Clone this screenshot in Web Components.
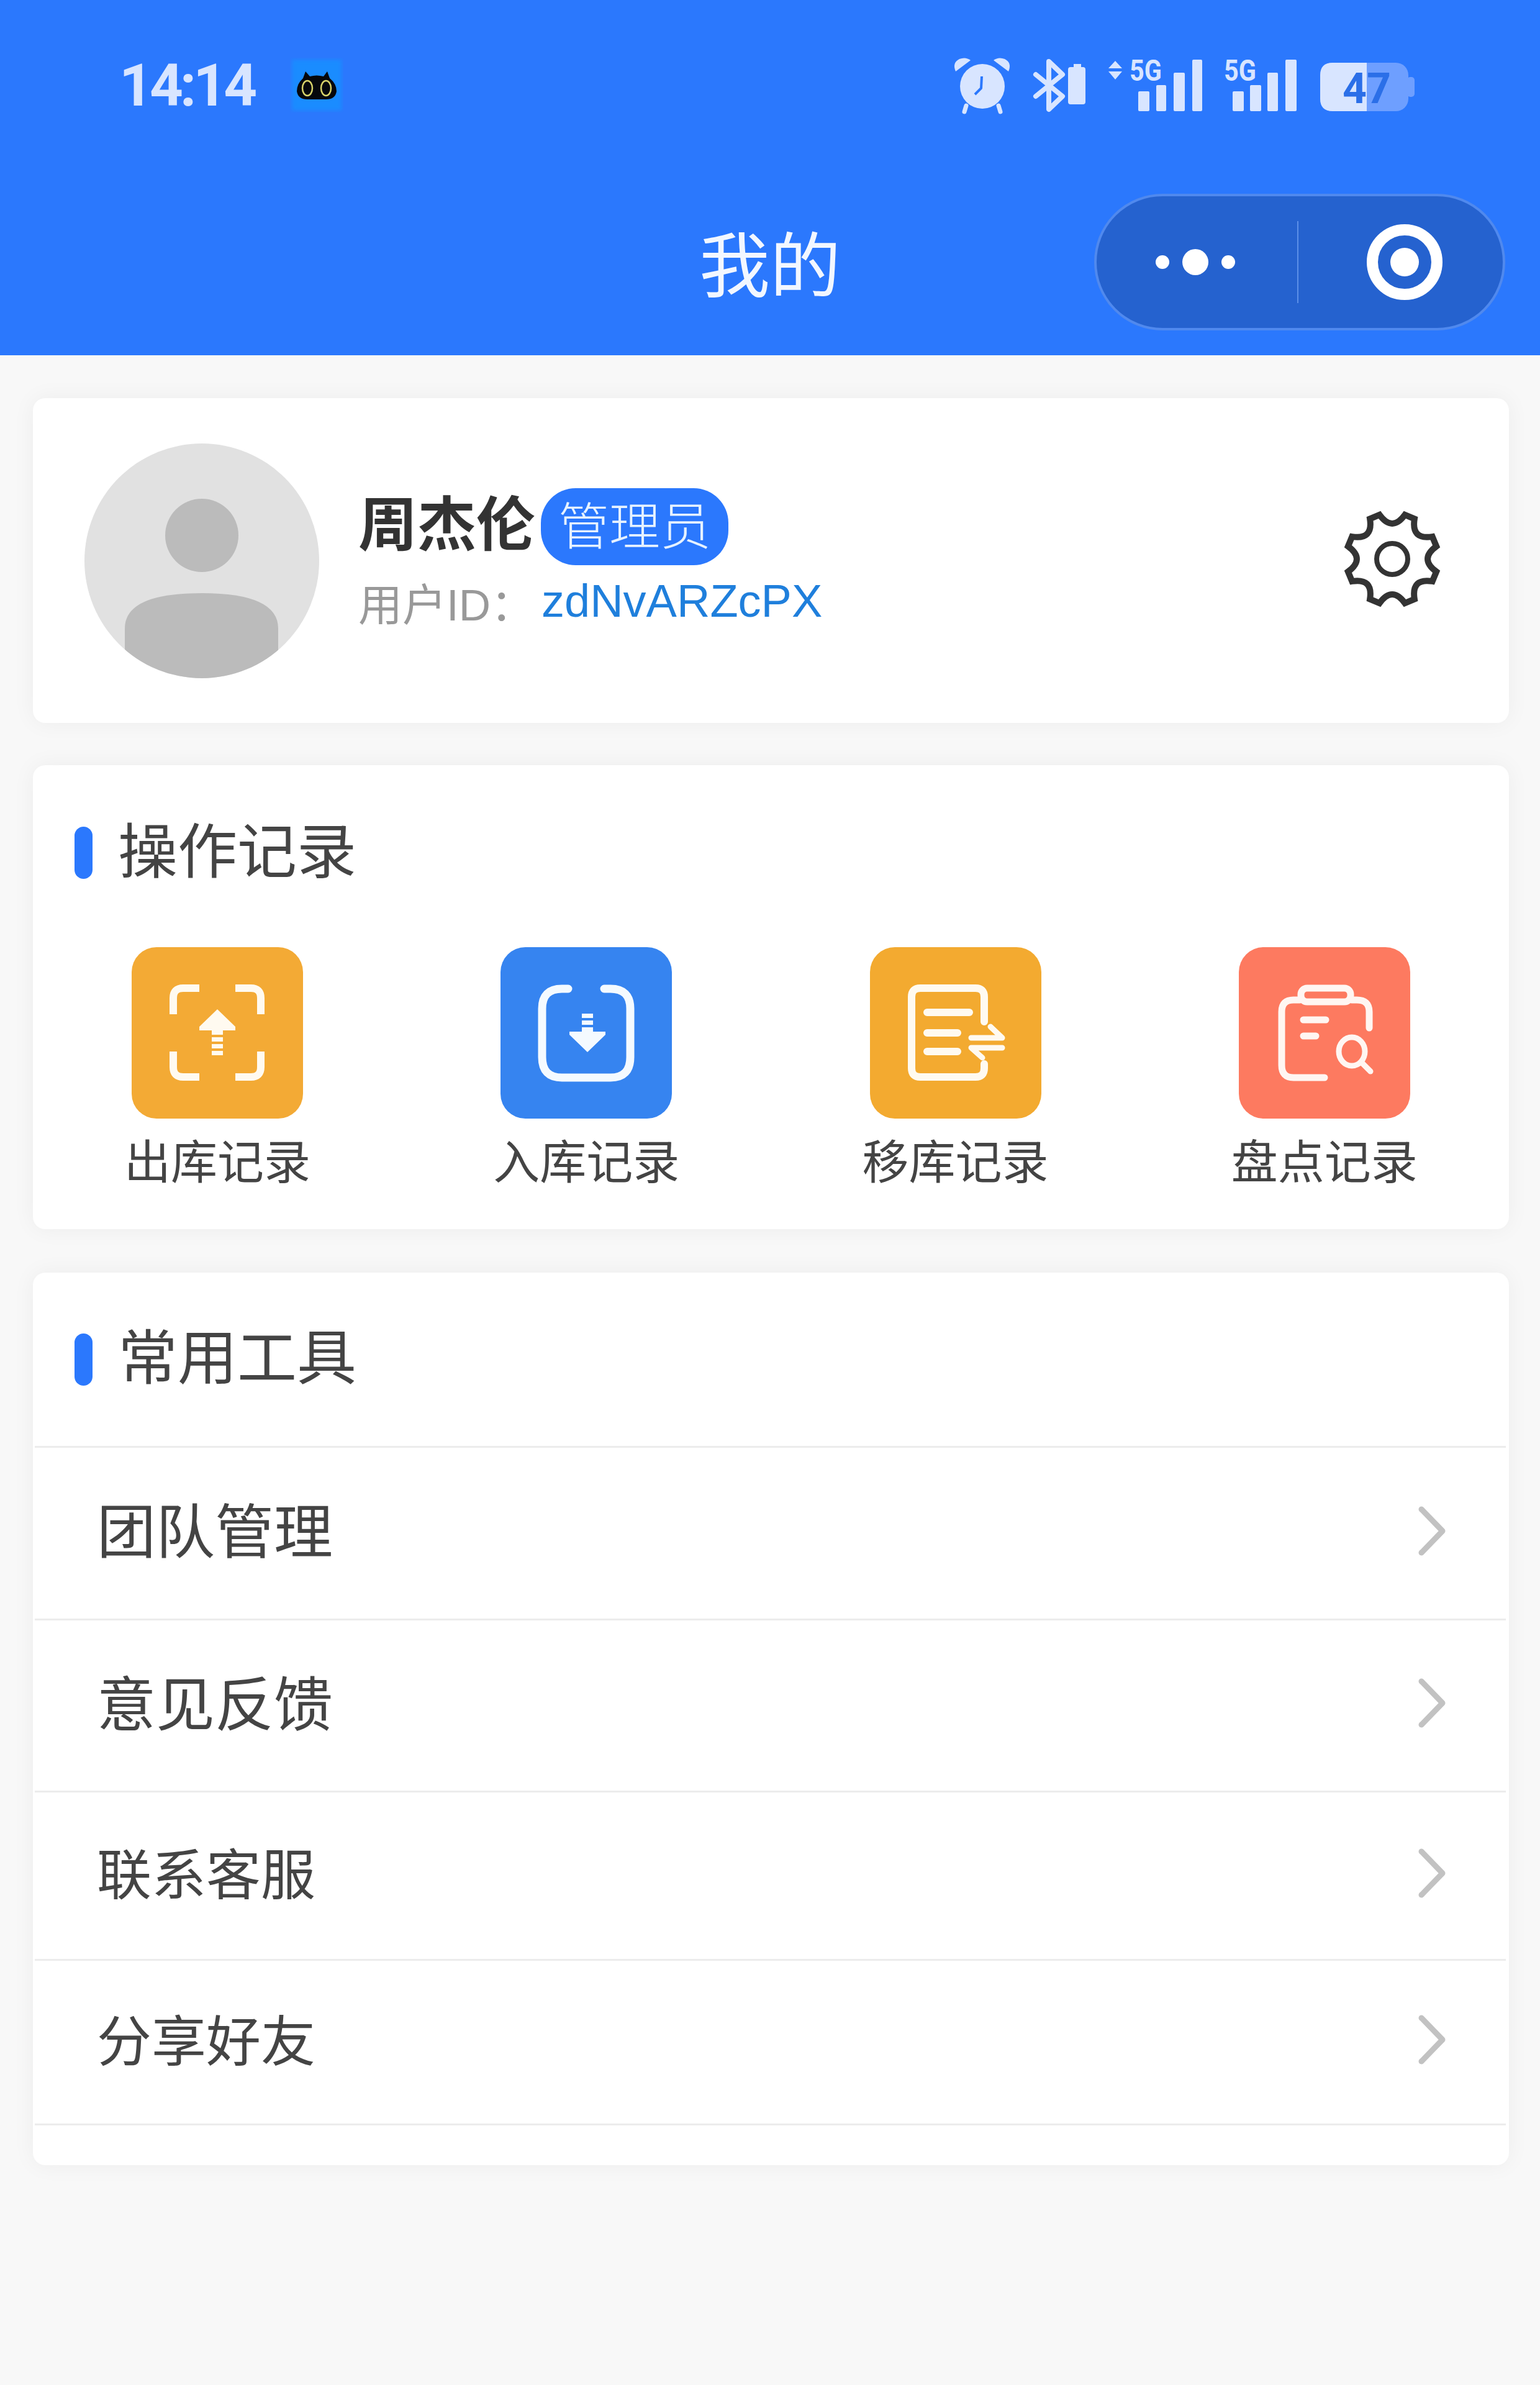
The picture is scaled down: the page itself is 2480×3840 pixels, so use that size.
<!DOCTYPE html>
<html lang="zh-CN">
<head>
<meta charset="utf-8">
<title>我的</title>
<style>
html, body {
    margin: 0;
    width: 2480px;
    height: 3840px;
    overflow: hidden;
    background: #f8f8f8;
    font-family: "Noto Sans CJK SC", "Noto Sans", sans-serif;
    color: #444;
}
</style>
</head>
<body>

<app-header>我的</app-header>

<page-body>
    <profile-card name="周杰伦" role="管理员" uid="zdNvARZcPX"></profile-card>

    <ui-card style="--pad-bottom: 67px">
        <section-title>操作记录</section-title>
        <record-grid>
            <record-item label="出库记录" color="#f3aa35">
                <svg viewBox="0 0 276 276" fill="none" stroke="#fffaf0" stroke-width="12">
                    <path d="M67 108V82Q67 66 83 66H109M167 66H192Q208 66 208 82V108M67 168V193Q67 209 83 209H109M167 209H192Q208 209 208 193V168"/>
                    <path d="M138 100L167 128V134H109V128Z" fill="#fffaf0" stroke="none"/>
                    <path d="M138 134V176" stroke-width="18" stroke-dasharray="7 4"/>
                </svg>
            </record-item>
            <record-item label="入库记录" color="#3684f0">
                <svg viewBox="0 0 276 276" fill="none" stroke="#f4faff" stroke-width="13" stroke-linecap="round">
                    <path d="M109 67H99Q67 67 67 99V177Q67 210 99 210H177Q209 210 209 177V99Q209 67 177 67H167"/>
                    <path d="M140 107V140" stroke-width="18" stroke-dasharray="7 4" stroke-linecap="butt"/>
                    <path d="M140 169L111 141V136H169V141Z" fill="#f4faff" stroke="none"/>
                </svg>
            </record-item>
            <record-item label="移库记录" color="#f3aa30">
                <svg viewBox="0 0 276 276" fill="none" stroke="#fffaf0" stroke-width="12" stroke-linecap="round">
                    <path d="M184 120V80Q184 66 170 66H81Q67 66 67 80V195Q67 209 81 209H170Q184 209 184 195V188"/>
                    <path d="M92 105H160M92 138H141M92 168H141"/>
                    <path d="M163 146H213L194 128M213 162H163L181 178" stroke-width="9" stroke-linejoin="round"/>
                </svg>
            </record-item>
            <record-item label="盘点记录" color="#fd7a60">
                <svg viewBox="0 0 276 276" fill="none" stroke="#fff6f2" stroke-width="11" stroke-linecap="round">
                    <rect x="100" y="66" width="80" height="22" rx="10"/>
                    <path d="M98 85H88Q69 85 69 104V190Q69 210 88 210H138M182 85H190Q210 85 210 104V130"/>
                    <path d="M104 117H140M104 143H124"/>
                    <ellipse cx="182" cy="168" rx="21" ry="23" stroke-width="9"/>
                    <path d="M198 186L212 200" stroke-width="9"/>
                </svg>
            </record-item>
        </record-grid>
    </ui-card>

    <ui-card style="--pad-bottom: 64px; margin-top: 2px">
        <section-title style="--title-h: 279px">常用工具</section-title>
        <tool-row style="--row-h: 278px; --row-font: 95px">团队管理</tool-row>
        <tool-row style="--row-h: 277px; --row-font: 95px">意见反馈</tool-row>
        <tool-row style="--row-h: 271px; --row-font: 88px">联系客服</tool-row>
        <tool-row style="--row-h: 268px; --row-font: 88px">分享好友</tool-row>
    </ui-card>
</page-body>

<script>
class StatusBar extends HTMLElement {

    constructor() {
        super()
        this._shadowRoot = this.attachShadow({mode: 'open'})
        this._shadowRoot.innerHTML = `
<style>
:host {
    display: flex;
    align-items: center;
    height: 270px;
    padding: 0 195px 0 192px;
    color: #d8e5ff;
}
#time {
    width: 240px;
    margin-top: 5px;
    font: 700 94px/1 Roboto, sans-serif;
    letter-spacing: -5px;
}
#cat {
    width: 86px;
    height: 88px;
    margin: 4px 0 0 35px;
}
#glow {
    filter: blur(3px);
}
#icons {
    width: 755px;
    height: 155px;
    margin: 4px 0 0 auto;
    fill: #d8e5ff;
}
text {
    font-family: Roboto, sans-serif;
    font-weight: 700;
}
</style>
<span id="time">14:14</span>
<svg id="cat" viewBox="0 0 86 88">
    <rect id="glow" x="3" y="3" width="80" height="82" fill="#1a8cff"/>
    <path d="M25 22L32 30Q43 27 54 30L60 22L64 33Q75 42 75 54Q73 67 58 67H28Q13 67 11 54Q11 42 21 33Z" fill="#06080c"/>
    <ellipse cx="28" cy="49" rx="8" ry="12" fill="none" stroke="#d8d36a" stroke-width="2.5"/>
    <ellipse cx="58" cy="49" rx="8" ry="12" fill="none" stroke="#d8d36a" stroke-width="2.5"/>
</svg>
<svg id="icons" viewBox="1530 60 755 155">
    <!-- alarm clock -->
    <path d="M1539 115Q1533 101 1545 95Q1555 91 1563 97Z"/>
    <path d="M1624 115Q1630 101 1618 95Q1608 91 1600 97Z"/>
    <circle cx="1582" cy="139" r="36"/>
    <path d="M1556 170L1553 180M1608 170L1611 180" stroke="#d8e5ff" stroke-width="7" stroke-linecap="round"/>
    <path d="M1581 123L1580 142L1570 152" fill="none" stroke="#2b78fd" stroke-width="4" stroke-linejoin="round"/>
    <!-- bluetooth and its small battery -->
    <path d="M1668 120L1711 155L1689 176V99L1711 120L1668 155" fill="none" stroke="#d8e5ff" stroke-width="8" stroke-linejoin="round" stroke-linecap="round"/>
    <path d="M1729 103H1741V108H1744Q1748 108 1748 112V164Q1748 168 1744 168H1724Q1720 168 1720 164V112Q1720 108 1724 108H1729Z"/>
    <!-- first sim -->
    <path d="M1796 98L1807 110H1785ZM1796 128L1785 115H1807Z"/>
    <text x="1819" y="130" font-size="48" textLength="52" lengthAdjust="spacingAndGlyphs">5G</text>
    <rect x="1833" y="147" width="18" height="32" rx="2"/>
    <rect x="1862" y="137" width="16" height="42" rx="2"/>
    <rect x="1890" y="117" width="18" height="62" rx="2"/>
    <rect x="1920" y="96" width="16" height="83" rx="2"/>
    <!-- second sim -->
    <text x="1971" y="130" font-size="48" textLength="52" lengthAdjust="spacingAndGlyphs">5G</text>
    <rect x="1985" y="147" width="18" height="32" rx="2"/>
    <rect x="2013" y="137" width="18" height="42" rx="2"/>
    <rect x="2041" y="117" width="17" height="62" rx="2"/>
    <rect x="2070" y="96" width="18" height="83" rx="2"/>
    <!-- battery, level 47 -->
    <rect x="2126" y="101" width="142" height="78" rx="20" fill="#6e9fff"/>
    <rect x="2266" y="124" width="12" height="32" rx="5" fill="#6e9fff"/>
    <path d="M2201 101H2146Q2126 101 2126 121V159Q2126 179 2146 179H2201Z"/>
    <text x="2201" y="166" font-size="68" text-anchor="middle" fill="#2b6fe8">47</text>
</svg>
`
    }

}

class NavCapsule extends HTMLElement {

    constructor() {
        super()
        this._shadowRoot = this.attachShadow({mode: 'open'})
        this._shadowRoot.innerHTML = `
<style>
:host {
    display: flex;
    align-items: center;
    box-sizing: border-box;
    width: 662px;
    height: 220px;
    background: #2562cf;
    border: 4px solid #5089ee;
    border-radius: 110px;
}
.half {
    flex: 1;
    display: flex;
    justify-content: center;
}
#divider {
    width: 2px;
    height: 132px;
    background: #5c8fe8;
}
svg {
    fill: #fff;
    display: block;
}
</style>
<div class="half" style="padding-right: 6px">
    <svg width="130" height="44" viewBox="0 0 130 44">
        <circle cx="12" cy="22" r="11"/>
        <circle cx="65" cy="22" r="21"/>
        <circle cx="118" cy="22" r="11"/>
    </svg>
</div>
<div id="divider"></div>
<div class="half" style="padding-left: 12px">
    <svg width="124" height="124" viewBox="0 0 124 124">
        <circle cx="62" cy="62" r="52" fill="none" stroke="#fff" stroke-width="18"/>
        <circle cx="62" cy="62" r="23"/>
    </svg>
</div>
`
    }

}

class AppHeader extends HTMLElement {

    constructor() {
        super()
        this._shadowRoot = this.attachShadow({mode: 'open'})
        this._shadowRoot.innerHTML = `
<style>
:host {
    display: block;
    height: 572px;
    background: #2b78fd;
}
#nav {
    display: grid;
    grid-template-columns: 1fr auto 1fr;
    align-items: center;
    padding: 42px 56px 0;
}
#title {
    margin-bottom: 4px;
    font-size: 114px;
    line-height: 216px;
    color: #f2f7ff;
}
nav-capsule {
    justify-self: end;
}
</style>
<status-bar></status-bar>
<div id="nav">
    <span></span>
    <span id="title"><slot></slot></span>
    <nav-capsule></nav-capsule>
</div>
`
    }

}

class PageBody extends HTMLElement {

    constructor() {
        super()
        this._shadowRoot = this.attachShadow({mode: 'open'})
        this._shadowRoot.innerHTML = `
<style>
:host {
    display: flex;
    flex-direction: column;
    gap: 68px;
    padding: 69px 50px 0 53px;
}
</style>
<slot></slot>
`
    }

}

class UiCard extends HTMLElement {

    constructor() {
        super()
        this._shadowRoot = this.attachShadow({mode: 'open'})
        this._shadowRoot.innerHTML = `
<style>
:host {
    display: block;
    background: #fff;
    border-radius: 20px;
    padding-bottom: var(--pad-bottom, 0);
    box-shadow: 0 0 36px rgba(0, 0, 0, .05);
}
</style>
<slot></slot>
`
    }

}

class ProfileCard extends HTMLElement {

    // gear outline: eight teeth joined by curved notches
    static gearPath(cx, cy) {
        const point = (r, deg) => {
            const a = (deg - 90) * Math.PI / 180
            return `${(cx + r * Math.cos(a)).toFixed(1)} ${(cy + r * Math.sin(a)).toFixed(1)}`
        }
        let d = ''
        for (let i = 0; i < 8; i++) {
            const notch = i * 45
            d += i === 0 ? `M${point(74, notch - 16)}` : ''
            d += `Q${point(43, notch)} ${point(74, notch + 16)}L${point(74, notch + 29)}`
        }
        return d + 'Z'
    }

    constructor() {
        super()
        this._shadowRoot = this.attachShadow({mode: 'open'})
        this._shadowRoot.innerHTML = `
<style>
:host {
    display: flex;
    align-items: center;
    box-sizing: border-box;
    height: 523px;
    padding: 0 108px 0 83px;
    background: #fff;
    border-radius: 20px;
    box-shadow: 0 0 36px rgba(0, 0, 0, .05);
}
#avatar {
    width: 378px;
    height: 378px;
    flex: none;
}
#info {
    margin-left: 63px;
    flex: 1;
}
#top {
    display: flex;
    align-items: center;
    height: 124px;
}
#name {
    margin-bottom: 20px;
    font-size: 95px;
    font-weight: 700;
    color: #333;
}
#role {
    margin-left: 9px;
    padding: 0 28px;
    height: 124px;
    line-height: 112px;
    font-size: 82px;
    font-weight: 300;
    color: #e6f2ff;
    background: #2b78fd;
    border-radius: 56px;
}
#bottom {
    display: flex;
    align-items: center;
    height: 104px;
    margin-top: 6px;
    font-size: 71px;
    color: #999;
}
#label {
    width: 295px;
    font-family: "Liberation Sans", "Noto Sans CJK SC", sans-serif;
}
#uid {
    font: 74px "Liberation Sans", sans-serif;
    color: #1f7fdc;
}
#gear {
    width: 160px;
    height: 160px;
    margin-bottom: 6px;
    flex: none;
}
</style>
<svg id="avatar" viewBox="0 0 378 378">
    <defs><clipPath id="round"><circle cx="189" cy="189" r="189"/></clipPath></defs>
    <circle cx="189" cy="189" r="189" fill="#e1e1e1"/>
    <circle cx="189" cy="148" r="59" fill="#bbb"/>
    <path d="M65 298Q65 241 189 241Q312 241 312 298V378H65Z" fill="#bbb" clip-path="url(#round)"/>
</svg>
<div id="info">
    <div id="top"><span id="name"></span><span id="role"></span></div>
    <div id="bottom"><span id="label">用户ID：</span><span id="uid"></span></div>
</div>
<svg id="gear" viewBox="0 0 160 160" fill="none" stroke="#333" stroke-linejoin="miter">
    <path stroke-width="10" d="${ProfileCard.gearPath(80, 80)}"/>
    <circle cx="80" cy="80" r="25" stroke-width="8"/>
</svg>
`
        this._shadowRoot.getElementById('name').textContent = this.getAttribute('name')
        this._shadowRoot.getElementById('role').textContent = this.getAttribute('role')
        this._shadowRoot.getElementById('uid').textContent = this.getAttribute('uid')
    }

}

class SectionTitle extends HTMLElement {

    constructor() {
        super()
        this._shadowRoot = this.attachShadow({mode: 'open'})
        this._shadowRoot.innerHTML = `
<style>
:host {
    display: flex;
    align-items: center;
    gap: 41px;
    height: var(--title-h, 282px);
    padding-left: 67px;
    font-size: 96px;
    color: #444;
}
#bar {
    width: 29px;
    height: 84px;
    background: #2b78fd;
    border-radius: 15px;
}
#text {
    margin-bottom: 20px;
}
</style>
<div id="bar"></div>
<span id="text"><slot></slot></span>
`
    }

}

class RecordGrid extends HTMLElement {

    constructor() {
        super()
        this._shadowRoot = this.attachShadow({mode: 'open'})
        this._shadowRoot.innerHTML = `
<style>
:host {
    display: grid;
    grid-template-columns: repeat(4, 1fr);
    margin-top: 11px;
}
</style>
<slot></slot>
`
    }

}

class RecordItem extends HTMLElement {

    constructor() {
        super()
        this._shadowRoot = this.attachShadow({mode: 'open'})
        this._shadowRoot.innerHTML = `
<style>
:host {
    display: flex;
    flex-direction: column;
    align-items: center;
}
#tile {
    width: 276px;
    height: 276px;
    border-radius: 40px;
}
::slotted(svg) {
    display: block;
    width: 276px;
    height: 276px;
}
#label {
    margin-top: 19px;
    font-size: 75px;
    line-height: 92px;
    color: #444;
}
</style>
<div id="tile"><slot></slot></div>
<div id="label"></div>
`
        this._shadowRoot.getElementById('tile').style.background = this.getAttribute('color')
        this._shadowRoot.getElementById('label').textContent = this.getAttribute('label')
    }

}

class ToolRow extends HTMLElement {

    constructor() {
        super()
        this._shadowRoot = this.attachShadow({mode: 'open'})
        this._shadowRoot.innerHTML = `
<style>
:host {
    display: flex;
    align-items: center;
    justify-content: space-between;
    box-sizing: border-box;
    height: var(--row-h);
    margin: 0 5px 0 3px;
    padding: 0 96px 0 100px;
    border-top: 3px solid #ececec;
    font-size: var(--row-font);
    color: #444;
}
:host(:last-child) {
    border-bottom: 3px solid #ececec;
}
#text {
    margin-bottom: 18px;
}
svg {
    width: 46px;
    height: 80px;
    margin-bottom: 8px;
}
</style>
<span id="text"><slot></slot></span>
<svg viewBox="0 0 46 80" fill="none" stroke="#c2c2c2" stroke-width="9" stroke-linecap="round" stroke-linejoin="round">
    <path d="M6 5L40 40L6 75"/>
</svg>
`
    }

}

window.customElements.define('status-bar', StatusBar)
window.customElements.define('nav-capsule', NavCapsule)
window.customElements.define('app-header', AppHeader)
window.customElements.define('page-body', PageBody)
window.customElements.define('ui-card', UiCard)
window.customElements.define('profile-card', ProfileCard)
window.customElements.define('section-title', SectionTitle)
window.customElements.define('record-grid', RecordGrid)
window.customElements.define('record-item', RecordItem)
window.customElements.define('tool-row', ToolRow)
</script>
</body>
</html>
